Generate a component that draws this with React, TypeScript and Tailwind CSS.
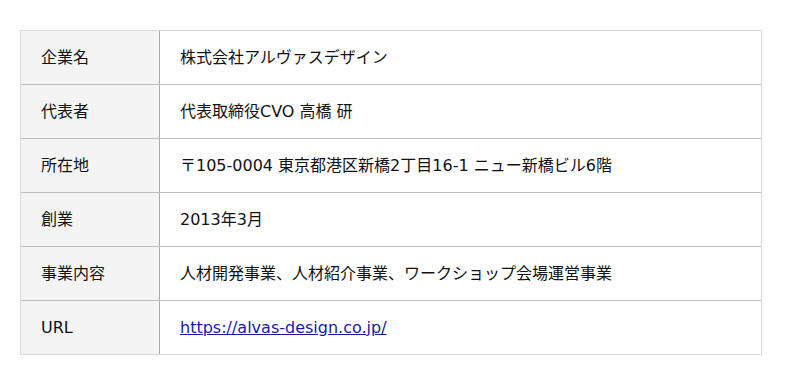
import React from "react";

const rows: { label: string; value: React.ReactNode }[] = [
  { label: "企業名", value: "株式会社アルヴァスデザイン" },
  { label: "代表者", value: "代表取締役CVO 高橋 研" },
  { label: "所在地", value: "〒105-0004 東京都港区新橋2丁目16-1 ニュー新橋ビル6階" },
  { label: "創業", value: "2013年3月" },
  { label: "事業内容", value: "人材開発事業、人材紹介事業、ワークショップ会場運営事業" },
  {
    label: "URL",
    value: (
      <a href="https://alvas-design.co.jp/" className="text-[#1a1aa6] underline">
        https://alvas-design.co.jp/
      </a>
    ),
  },
];

export default function App() {
  return (
    <div
      className="w-[800px] h-[385px] bg-white pt-[30px] pl-[20px] text-[16px] text-[#111]"
      style={{ fontFamily: '"DejaVu Sans", "Noto Sans CJK JP", sans-serif' }}
    >
      <div className="w-[742px] border-t border-x border-[#dadada]">
        {rows.map((r, i) => (
          <div
            key={r.label}
            className={`flex h-[54px] border-b ${i === rows.length - 1 ? "border-[#d6d6d6]" : "border-[#bdbdbd]"}`}
          >
            <div className="w-[139px] shrink-0 bg-[#f4f4f4] border-r border-[#a9a9a9] flex items-center pl-5">
              {r.label}
            </div>
            <div className="flex-1 flex items-center pl-5">{r.value}</div>
          </div>
        ))}
      </div>
    </div>
  );
}
